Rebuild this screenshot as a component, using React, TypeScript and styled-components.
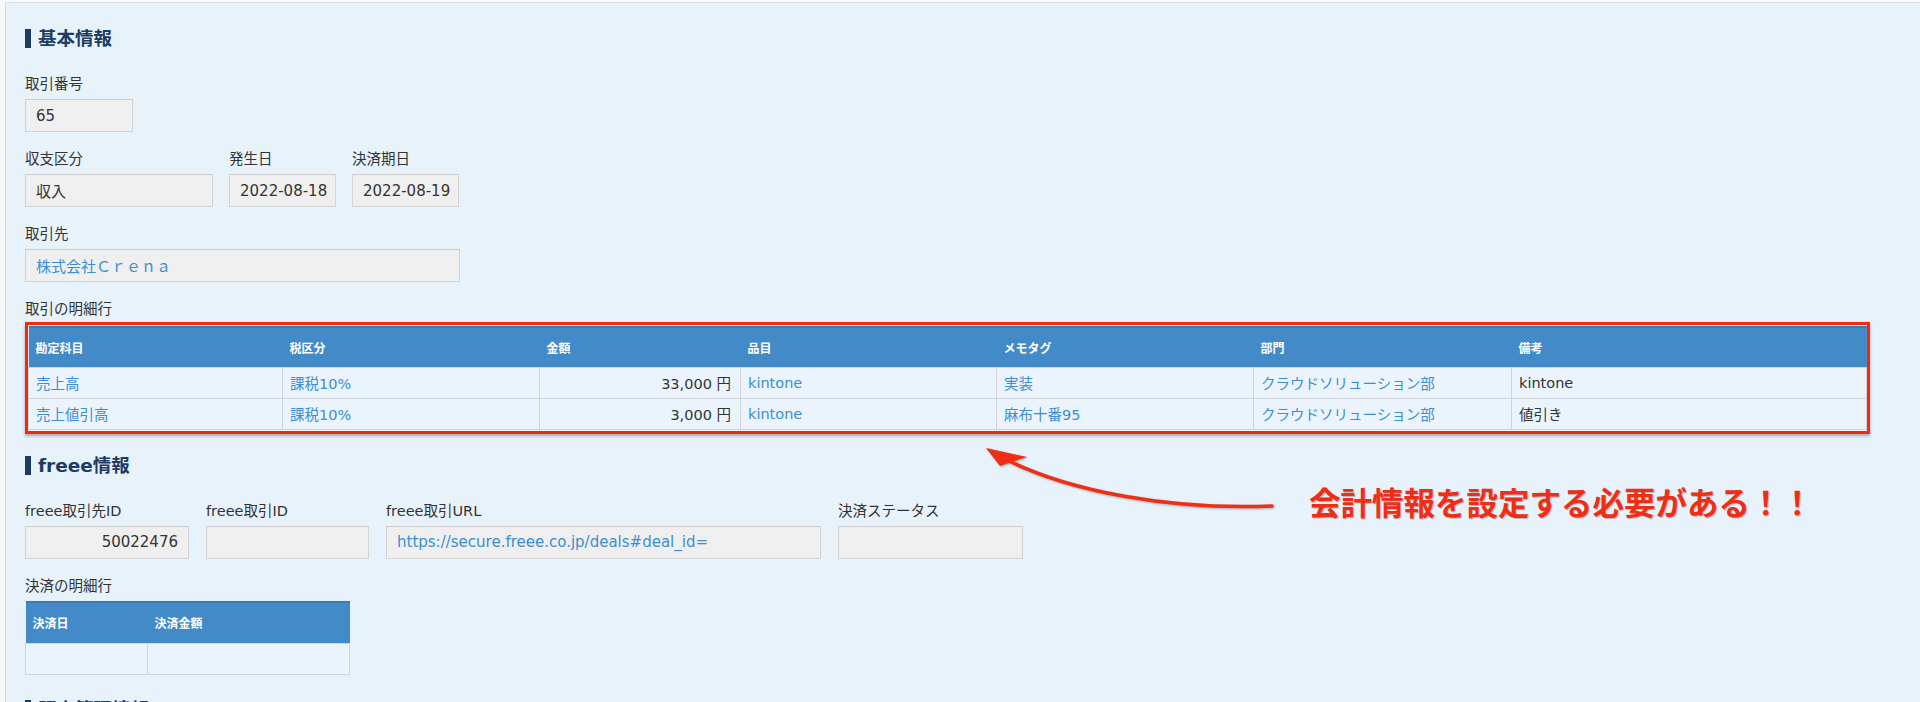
import React from "react";
import styled, { createGlobalStyle } from "styled-components";

const GlobalStyle = createGlobalStyle`
  html, body { margin: 0; padding: 0; background: #ffffff; }
  body { font-family: "DejaVu Sans", "Noto Sans CJK JP", sans-serif; color: #333333; }
  *, *::before, *::after { box-sizing: border-box; }
`;

const Page = styled.div`
  position: relative;
  width: 1920px;
  height: 702px;
  overflow: hidden;
  padding: 2px 0 0 5px;
  background: #f7f8f9;
`;

const Panel = styled.main`
  display: flex;
  flex-direction: column;
  align-items: flex-start;
  min-height: 720px;
  padding: 26px 0 0 19px;
  background: #e8f2fb;
  border-top: 1px solid #dde0e3;
  border-left: 1px solid #d5d9dd;
`;

const Section = styled.section<{ $top: number }>`
  display: flex;
  flex-direction: column;
  align-items: flex-start;
  margin-top: ${(p) => p.$top}px;
`;

const Heading = styled.h2`
  display: flex;
  align-items: center;
  gap: 7px;
  height: 19px;
  margin: 0 0 26px;
  font-size: 18.5px;
  line-height: 19px;
  font-weight: 700;
  color: #1d3b63;
  white-space: nowrap;
  &::before {
    content: "";
    width: 6px;
    height: 19px;
    background: #1d3b63;
  }
`;

const FieldStack = styled.div`
  display: flex;
  flex-direction: column;
  gap: 17px;
`;

const FieldRow = styled.div<{ $gap: number }>`
  display: flex;
  gap: ${(p) => p.$gap}px;
`;

const Field = styled.div<{ $width?: number }>`
  display: flex;
  flex-direction: column;
  align-items: stretch;
  width: ${(p) => (p.$width ? `${p.$width}px` : "auto")};
`;

const Label = styled.div<{ $gap?: number }>`
  margin-bottom: ${(p) => p.$gap ?? 5}px;
  font-size: 14.5px;
  line-height: 20px;
  color: #333333;
  white-space: nowrap;
`;

const ReadOnly = styled.div<{ $align?: "left" | "right"; $link?: boolean }>`
  display: flex;
  align-items: center;
  justify-content: ${(p) => (p.$align === "right" ? "flex-end" : "flex-start")};
  height: 33px;
  padding: 0 10px;
  background: #efefef;
  border: 1px solid #d3d3d3;
  border-top-color: #cbcbcb;
  font-size: 15px;
  color: ${(p) => (p.$link ? "#3a8ed6" : "#333333")};
  white-space: nowrap;
  overflow: hidden;
`;

const RedFrame = styled.div`
  padding: 1px 0;
  border: 3px solid #f2290f;
  box-shadow: 0 2px 3px rgba(0, 0, 0, 0.3);
`;

const DataTable = styled.table<{ $width: number }>`
  width: ${(p) => p.$width}px;
  table-layout: fixed;
  border-collapse: collapse;
`;

const Th = styled.th<{ $h: number }>`
  height: ${(p) => p.$h}px;
  padding: 0 7px;
  background: #438ac8;
  border-top: 2px solid #3a7aba;
  color: #ffffff;
  font-size: 12px;
  font-weight: 700;
  text-align: left;
  vertical-align: middle;
  white-space: nowrap;
`;

const Td = styled.td<{ $align?: "left" | "right"; $link?: boolean }>`
  height: 31px;
  padding: 0 ${(p) => (p.$align === "right" ? "9px" : "7px")} 0 7px;
  background: #ebf4fc;
  border: 1px solid #cfd5db;
  font-size: 14.5px;
  text-align: ${(p) => p.$align ?? "left"};
  color: ${(p) => (p.$link ? "#3a8ed6" : "#333333")};
  vertical-align: middle;
  white-space: nowrap;
  overflow: hidden;
`;

const ArrowSvg = styled.svg`
  position: absolute;
  left: 970px;
  top: 440px;
  width: 320px;
  height: 80px;
  overflow: visible;
  pointer-events: none;
  filter: drop-shadow(1px 1px 1px rgba(0, 0, 0, 0.3));
`;

const Callout = styled.div`
  position: absolute;
  left: 1309px;
  top: 486px;
  font-family: "Noto Sans CJK JP", sans-serif;
  font-size: 31.5px;
  line-height: 1;
  font-weight: 700;
  color: #f02d15;
  white-space: nowrap;
  text-shadow: 1px 1px 1px rgba(0, 0, 0, 0.25);
`;

type Cell = { text: string; link?: boolean; align?: "left" | "right" };

const detailCols = [
  { title: "勘定科目", width: 254 },
  { title: "税区分", width: 257 },
  { title: "金額", width: 201 },
  { title: "品目", width: 256 },
  { title: "メモタグ", width: 257 },
  { title: "部門", width: 258 },
  { title: "備考", width: 355 },
];

const detailRows: Cell[][] = [
  [
    { text: "売上高", link: true },
    { text: "課税10%", link: true },
    { text: "33,000 円", align: "right" },
    { text: "kintone", link: true },
    { text: "実装", link: true },
    { text: "クラウドソリューション部", link: true },
    { text: "kintone" },
  ],
  [
    { text: "売上値引高", link: true },
    { text: "課税10%", link: true },
    { text: "3,000 円", align: "right" },
    { text: "kintone", link: true },
    { text: "麻布十番95", link: true },
    { text: "クラウドソリューション部", link: true },
    { text: "値引き" },
  ],
];

const payCols = [
  { title: "決済日", width: 122 },
  { title: "決済金額", width: 202 },
];

export default function App() {
  return (
    <>
      <GlobalStyle />
      <Page>
        <Panel>
          <Section $top={0}>
            <Heading>基本情報</Heading>
            <FieldStack>
              <FieldRow $gap={17}>
                <Field $width={108}>
                  <Label>取引番号</Label>
                  <ReadOnly>65</ReadOnly>
                </Field>
              </FieldRow>
              <FieldRow $gap={16}>
                <Field $width={188}>
                  <Label>収支区分</Label>
                  <ReadOnly>収入</ReadOnly>
                </Field>
                <Field $width={107}>
                  <Label>発生日</Label>
                  <ReadOnly>2022-08-18</ReadOnly>
                </Field>
                <Field $width={107}>
                  <Label>決済期日</Label>
                  <ReadOnly>2022-08-19</ReadOnly>
                </Field>
              </FieldRow>
              <FieldRow $gap={17}>
                <Field $width={435}>
                  <Label>取引先</Label>
                  <ReadOnly $link>株式会社Ｃｒｅｎａ</ReadOnly>
                </Field>
              </FieldRow>
              <Field>
                <Label $gap={3}>取引の明細行</Label>
                <RedFrame>
                  <DataTable $width={1838}>
                    <colgroup>
                      {detailCols.map((c) => (
                        <col key={c.title} style={{ width: c.width }} />
                      ))}
                    </colgroup>
                    <thead>
                      <tr>
                        {detailCols.map((c) => (
                          <Th key={c.title} $h={40}>
                            {c.title}
                          </Th>
                        ))}
                      </tr>
                    </thead>
                    <tbody>
                      {detailRows.map((row, i) => (
                        <tr key={i}>
                          {row.map((cell, j) => (
                            <Td key={j} $link={cell.link} $align={cell.align}>
                              {cell.text}
                            </Td>
                          ))}
                        </tr>
                      ))}
                    </tbody>
                  </DataTable>
                </RedFrame>
              </Field>
            </FieldStack>
          </Section>

          <Section $top={22}>
            <Heading>freee情報</Heading>
            <FieldStack>
              <FieldRow $gap={17}>
                <Field $width={164}>
                  <Label>freee取引先ID</Label>
                  <ReadOnly $align="right">50022476</ReadOnly>
                </Field>
                <Field $width={163}>
                  <Label>freee取引ID</Label>
                  <ReadOnly />
                </Field>
                <Field $width={435}>
                  <Label>freee取引URL</Label>
                  <ReadOnly $link>https://secure.freee.co.jp/deals#deal_id=</ReadOnly>
                </Field>
                <Field $width={185}>
                  <Label>決済ステータス</Label>
                  <ReadOnly />
                </Field>
              </FieldRow>
              <Field $width={324}>
                <Label>決済の明細行</Label>
                <DataTable $width={324}>
                  <colgroup>
                    {payCols.map((c) => (
                      <col key={c.title} style={{ width: c.width }} />
                    ))}
                  </colgroup>
                  <thead>
                    <tr>
                      {payCols.map((c) => (
                        <Th key={c.title} $h={42}>
                          {c.title}
                        </Th>
                      ))}
                    </tr>
                  </thead>
                  <tbody>
                    <tr>
                      <Td />
                      <Td />
                    </tr>
                  </tbody>
                </DataTable>
              </Field>
            </FieldStack>
          </Section>

          <Section $top={25}>
            <Heading>販売管理情報</Heading>
          </Section>
        </Panel>

        <ArrowSvg viewBox="0 0 320 80" aria-hidden="true">
          <path
            d="M302 66 C 200 70, 100 52, 33 18"
            fill="none"
            stroke="#f02d15"
            strokeWidth="3.6"
            strokeLinecap="round"
          />
          <polygon points="16,8 57,17 30,26" fill="#f02d15" />
        </ArrowSvg>
        <Callout>会計情報を設定する必要がある！！</Callout>
      </Page>
    </>
  );
}
